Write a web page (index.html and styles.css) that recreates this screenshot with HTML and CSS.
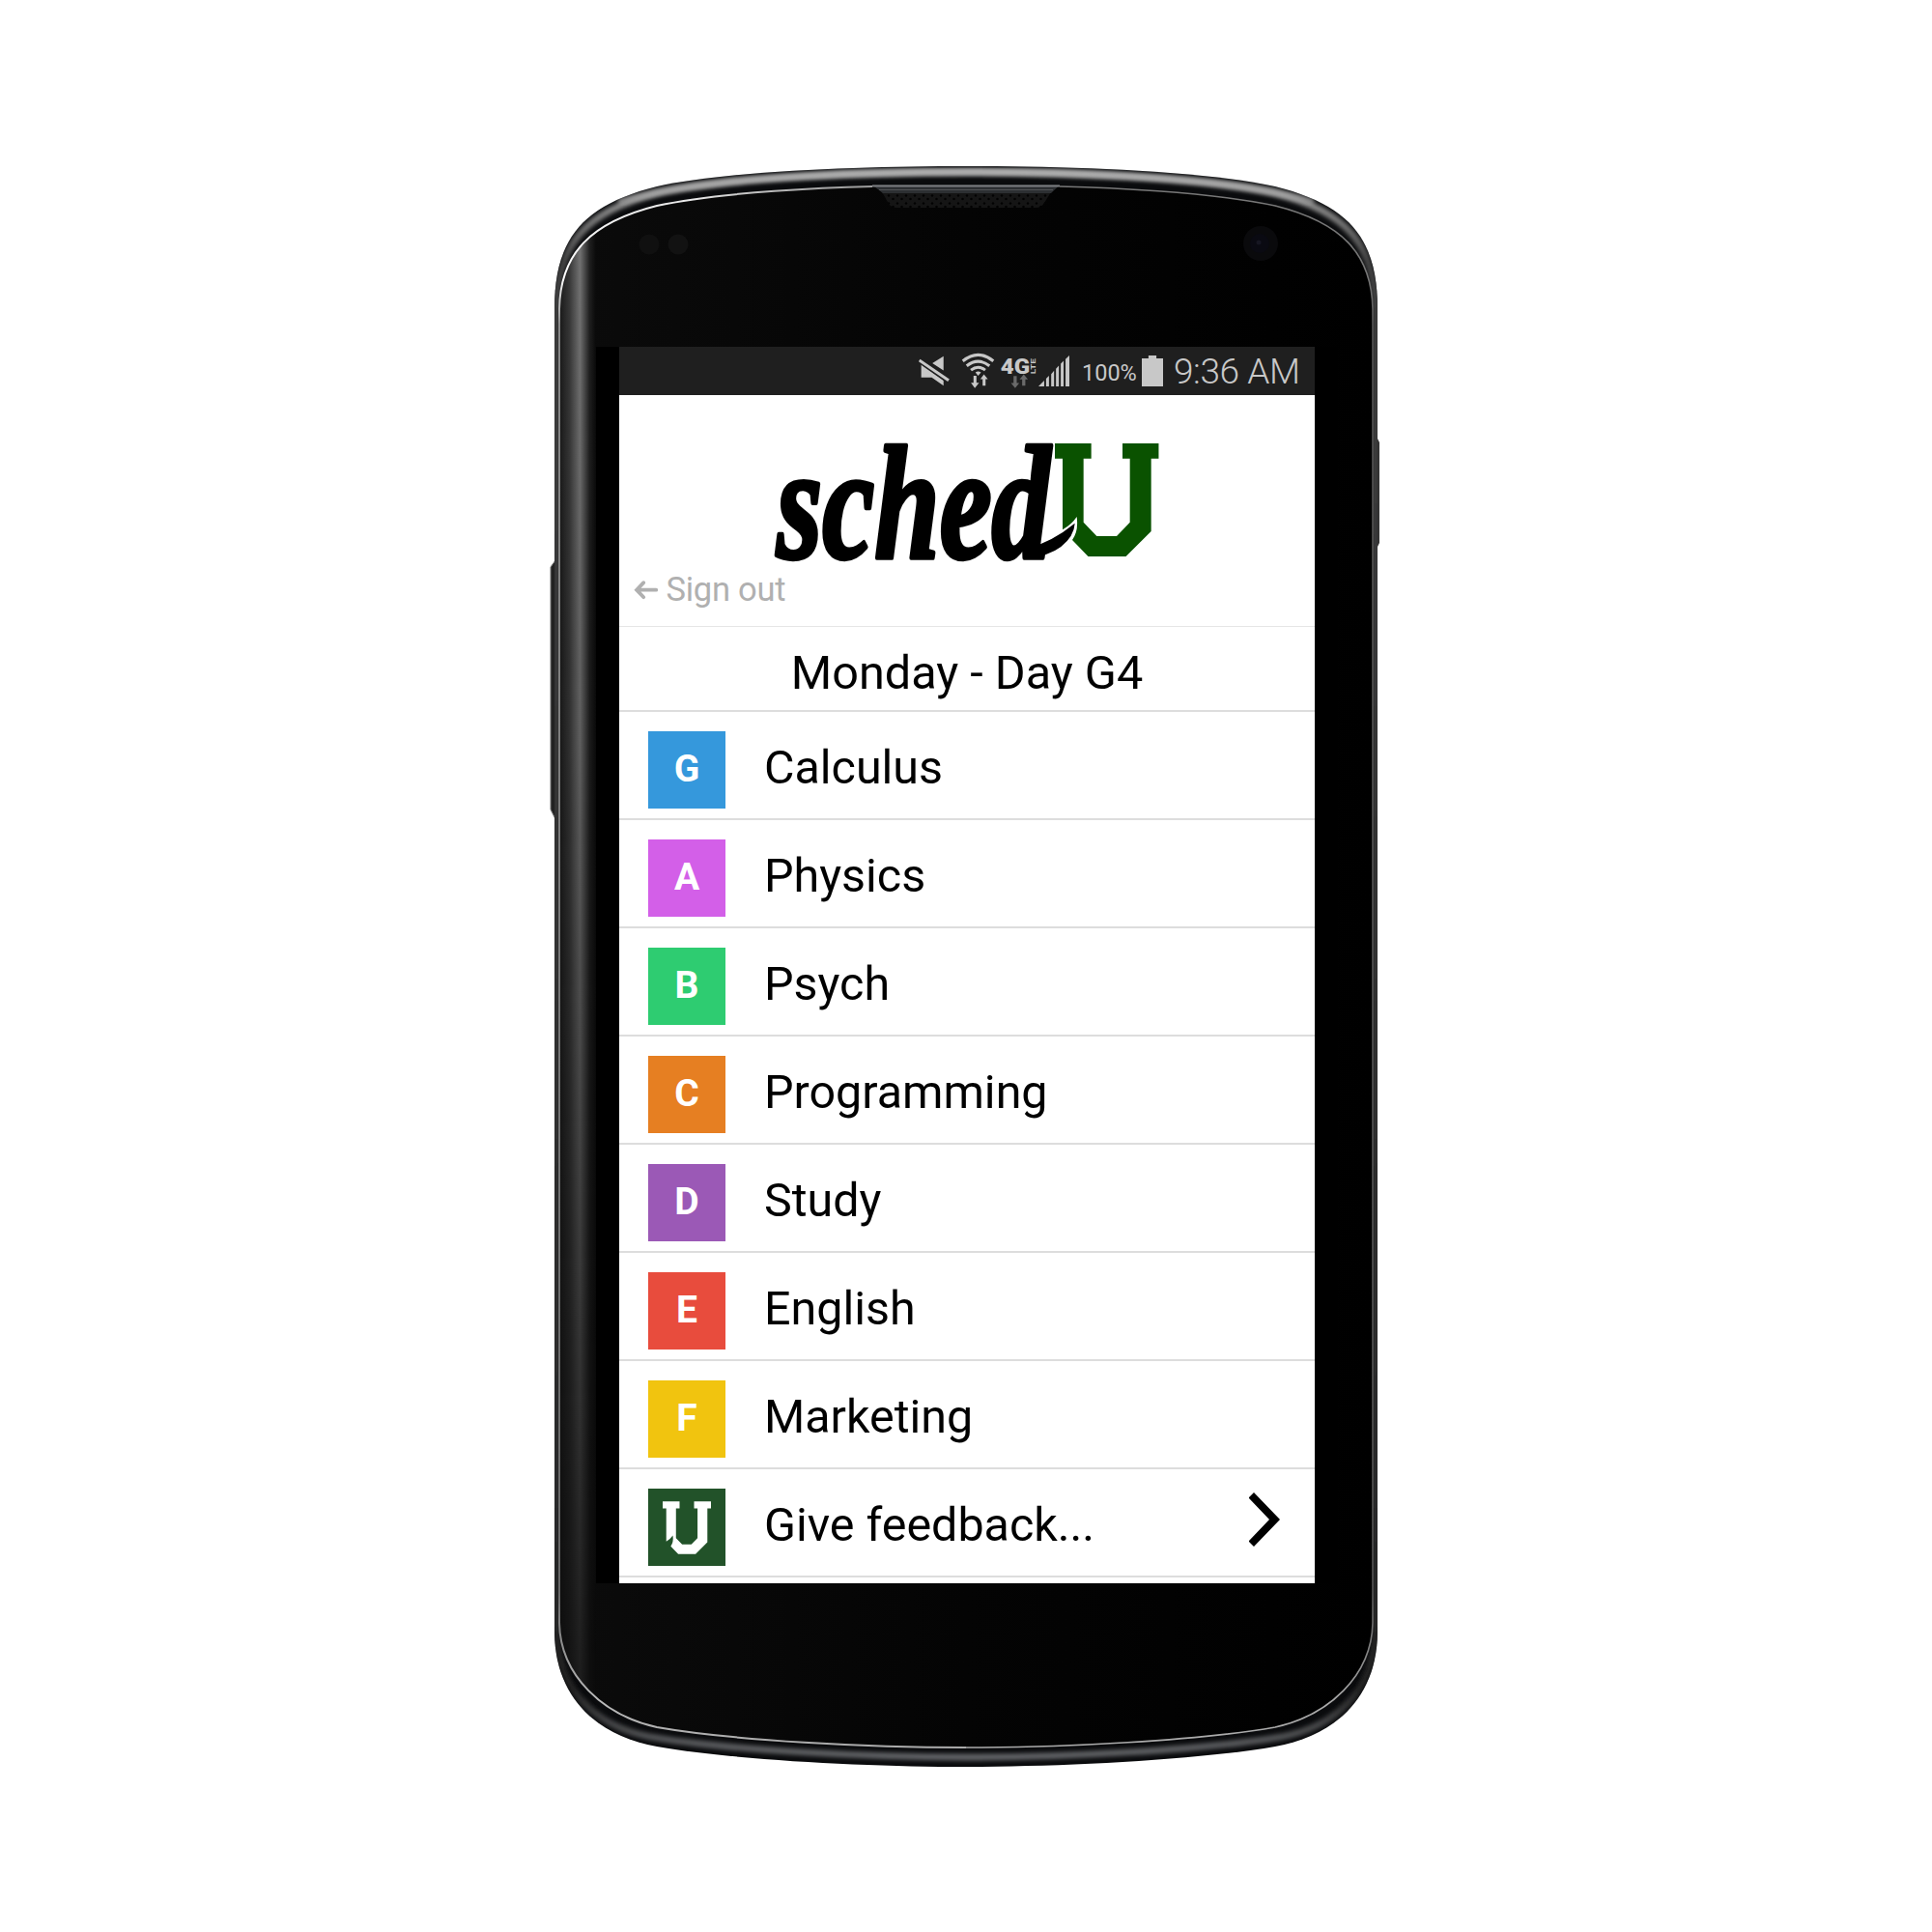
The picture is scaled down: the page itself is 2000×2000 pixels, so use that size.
FILE: index.html
```html
<!DOCTYPE html>
<html lang="en">
<head>
<meta charset="utf-8">
<title>schedU</title>
<link rel="stylesheet" href="styles.css">
</head>
<body>
<svg class="defs" width="0" height="0" aria-hidden="true">
  <symbol id="emblem" viewBox="906 57 323 352">
    <path d="M906 57H1019V104H995V302L1036 345H1098L1139 302V104H1116V57H1229V104H1205V330L1126 409H1010L960 357Q980 330 974 285Q958 309 930 325V104H906Z"/>
  </symbol>
</svg>
<main class="stage">
  <svg class="phone" viewBox="0 0 2000 2000" aria-hidden="true">
    <defs>
      <path id="body" d="M574 320C574 250 600 213 680 193C760 176 900 172 1000 172S1240 176 1320 193C1400 213 1426 250 1426 320V1690C1425 1760 1380 1797 1320 1808C1240 1822 1100 1829 1000 1829S760 1822 680 1808C620 1797 575 1760 574 1690Z"/>
      <path id="face" d="M579 320C580 262 612 230 680 213C750 198 860 194 903 193H1097C1140 194 1250 198 1320 213C1388 230 1420 262 1421 320V1680C1420 1735 1375 1776 1320 1788C1240 1802 1100 1809 1000 1809S760 1802 680 1788C625 1776 580 1735 579 1680Z"/>
      <clipPath id="bodyClip"><use href="#body"/></clipPath>
      <clipPath id="faceClip"><use href="#face"/></clipPath>
      <linearGradient id="glass"><stop offset="0" stop-color="#0b0b0b"/><stop offset=".5" stop-color="#040404"/><stop offset="1" stop-color="#000"/></linearGradient>
      <linearGradient id="sheen"><stop offset="0" stop-color="#1c1c1c"/><stop offset=".25" stop-color="#383838"/><stop offset=".55" stop-color="#747474"/><stop offset=".68" stop-color="#4c4c4c"/><stop offset=".82" stop-color="#202020"/><stop offset="1" stop-color="#0a0a0a"/></linearGradient>
      <linearGradient id="fade" x2="0" y2="1"><stop offset="0" stop-color="#fff"/><stop offset=".35" stop-color="#ccc"/><stop offset=".8" stop-color="#555"/><stop offset="1" stop-color="#222"/></linearGradient>
      <mask id="sheenMask"><rect x="570" y="200" width="60" height="1620" fill="url(#fade)"/></mask>
      <linearGradient id="rim" gradientUnits="userSpaceOnUse" x1="0" y1="172" x2="0" y2="1829"><stop offset="0" stop-color="#c8c8c8"/><stop offset=".025" stop-color="#888"/><stop offset=".06" stop-color="#444"/><stop offset=".9" stop-color="#2b2b2b"/><stop offset=".95" stop-color="#222"/><stop offset="1" stop-color="#6a6c70"/></linearGradient>
      <linearGradient id="edgeL" gradientUnits="userSpaceOnUse" x1="0" y1="190" x2="0" y2="1809"><stop offset="0" stop-color="#8a8a8a"/><stop offset=".01" stop-color="#e8e8e8"/><stop offset=".06" stop-color="#fff"/><stop offset=".09" stop-color="#888"/><stop offset=".9" stop-color="#666"/><stop offset=".97" stop-color="#bbb"/><stop offset="1" stop-color="#aaa"/></linearGradient>
      <linearGradient id="edgeR" gradientUnits="userSpaceOnUse" x1="0" y1="190" x2="0" y2="1809"><stop offset="0" stop-color="#777"/><stop offset=".06" stop-color="#777"/><stop offset=".09" stop-color="#555"/><stop offset=".9" stop-color="#555"/><stop offset=".97" stop-color="#aaa"/><stop offset="1" stop-color="#aaa"/></linearGradient>
      <filter id="soft2"><feGaussianBlur stdDeviation="2"/></filter>
      <pattern id="mesh" width="9" height="8" patternUnits="userSpaceOnUse"><rect width="9" height="8" fill="#151515"/><circle cx="2" cy="2.5" r="1.3" fill="#020202"/><circle cx="6.5" cy="6" r="1.3" fill="#020202"/></pattern>
    </defs>
    <path d="M575 580L570 587V838L575 848Z" fill="#222" stroke="#777" stroke-width="1"/>
    <path d="M1425 452L1428 458V562L1425 568Z" fill="#333"/>
    <use href="#body" fill="#0a0b0d"/>
    <g clip-path="url(#bodyClip)">
      <path d="M576 320C577 254 605 219 680 200C760 183 900 178 1000 178S1240 183 1320 200C1395 219 1423 254 1424 320V1690C1422 1752 1380 1790 1320 1799C1240 1812 1100 1819 1000 1819S760 1812 680 1799C620 1790 578 1752 576 1690Z" fill="none" stroke="url(#rim)" stroke-width="7" filter="url(#soft2)"/>
      <path d="M640 209C660 203 670 201 680 199C760 182 900 178 1000 178S1240 182 1320 199C1340 203 1350 206 1360 209" fill="none" stroke="#aaa" stroke-width="6" opacity=".7" filter="url(#soft2)"/>
    </g>
    <use href="#face" fill="url(#glass)"/>
    <g clip-path="url(#faceClip)"><rect x="580" y="200" width="37" height="1610" fill="url(#sheen)" mask="url(#sheenMask)"/></g>
    <path d="M903 193C860 194 750 198 680 213C612 230 580 262 579 320V1680C580 1735 625 1776 680 1788C760 1802 900 1809 1000 1809" fill="none" stroke="url(#edgeL)" stroke-width="2"/>
    <path d="M1097 193C1140 194 1250 198 1320 213C1388 230 1420 262 1421 320V1680C1420 1735 1375 1776 1320 1788C1240 1802 1100 1809 1000 1809" fill="none" stroke="url(#edgeR)" stroke-width="1.6"/>
    <path d="M903 193Q910 194 915 202L920 211Q923 215 928 215H1072Q1078 215 1081 210L1086 202Q1090 194 1097 193Z" fill="url(#mesh)"/>
    <path d="M903 191.500H1097L1088 200H914Z" fill="#2c2f32"/>
    <path d="M903 192.500H1097" stroke="#7b7d80" stroke-width="2"/>
    <path d="M910 196.500H1090" stroke="#505255" stroke-width="1"/>
    <circle cx="672" cy="253" r="10.500" fill="#101010"/><circle cx="702" cy="253" r="10.500" fill="#121212"/>
    <circle cx="1305" cy="252" r="18" fill="#0a0a0c"/><circle cx="1304" cy="252" r="10" fill="#0a0a12"/><circle cx="1303" cy="251" r="2.500" fill="#161622"/>
    <path d="M617 359H1385V1639H617Z" fill="#000"/>
  </svg>

  <section class="screen">
    <header class="status">
      <svg class="mute" viewBox="63 40 97 97"><path d="M141 42V87L106 64ZM71 67L141 117V135L104 109H71Z"/><path d="M67 54L157 117" class="cut"/><path d="M65 55L157 118" class="bar"/></svg>
      <svg class="wifi" viewBox="200 33 98 107"><g class="arc"><path d="M202 56Q249 18 296 56"/><path d="M214 71Q249 43 284 71"/><path d="M227 84Q249 67 271 84"/></g><path d="M241 91Q249 85 258 91L249 101Z"/><path d="M235 101H244V123H252L239 139L227 123H235ZM263 132V112H256L267 97L279 112H272V132Z"/></svg>
      <svg class="lte" viewBox="320 40 112 100"><text class="g4" x="319" y="94" textLength="92" lengthAdjust="spacingAndGlyphs">4G</text><text class="ltet" transform="translate(430 95) rotate(-90)" textLength="49" lengthAdjust="spacingAndGlyphs">LTE</text><path class="dim" d="M360 101H370V123H378L365 139L352 123H360ZM387 132V112H379L392 96L405 112H397V132Z"/></svg>
      <svg class="signal" viewBox="435 40 97 97"><path d="M435 137L453 119V137ZM459 113L468 104V137H459ZM475 98L484 88V137H475ZM490 82L499 72V137H490ZM505 66L514 57V137H505ZM520 51L532 40V137H520Z"/></svg>
      <span class="percent">100%</span>
      <svg class="battery" viewBox="757 38 67 97"><path d="M778 38H803V47H824V135H757V47H778Z"/></svg>
      <time class="clock">9:36 AM</time>
    </header>
    <div class="brand">
      <svg class="logo" viewBox="0 0 1260 480" role="img" aria-label="schedU">
        <text class="script" x="42" y="410" textLength="850" lengthAdjust="spacingAndGlyphs">sched</text>
        <path d="M815 385Q895 365 968 305Q966 345 925 378Q885 408 832 408Z"/>
        <use href="#emblem" x="906" y="57" width="323" height="352" class="green"/>
      </svg>
      <a class="signout"><svg viewBox="80 63 70 55"><path d="M145 91H88M107 69L86 91L107 113"/></svg><span>Sign out</span></a>
    </div>
    <h1 class="day"><span>Monday - Day G4</span></h1>
    <ul class="periods">
      <li><b class="tile blue">G</b><span>Calculus</span></li>
      <li><b class="tile pink">A</b><span>Physics</span></li>
      <li><b class="tile mint">B</b><span>Psych</span></li>
      <li><b class="tile orange">C</b><span>Programming</span></li>
      <li><b class="tile purple">D</b><span>Study</span></li>
      <li><b class="tile red">E</b><span>English</span></li>
      <li><b class="tile yellow">F</b><span>Marketing</span></li>
      <li><b class="tile forest"><svg><use href="#emblem"/></svg></b><span>Give feedback...</span><svg class="chevron" viewBox="0 0 32 56"><path d="M5 0L32 28L5 56L0 51V50L21 28L0 6V5Z"/></svg></li>
    </ul>
  </section>
</main>
</body>
</html>
```
FILE: styles.css
```css
* { box-sizing: border-box; }
body { margin: 0; background: #fff; font-family: Roboto, "Liberation Sans", sans-serif; color: #000; }
svg { display: block; flex: none; }
.defs { position: absolute; }
.stage { width: 2000px; height: 2000px; display: grid; overflow: hidden; }
.phone { grid-area: 1 / 1; width: 2000px; height: 2000px; }
.screen { grid-area: 1 / 1; z-index: 1; margin: 359px 0 0 641px; width: 720px; height: 1280px; background: #fff; overflow: hidden; }

.status { height: 50px; background: #1f1f1f; color: #c8c8c8; fill: #c8c8c8; display: flex; align-items: flex-start; padding: 0 0 0 310px; white-space: nowrap; }
.mute { width: 32px; height: 32px; margin-top: 9px; }
.mute .cut { stroke: #1f1f1f; stroke-width: 22; }
.mute .bar { stroke: #c8c8c8; stroke-width: 9; }
.wifi { width: 33px; height: 36px; margin: 7px 0 0 13px; overflow: visible; }
.wifi .arc { fill: none; stroke: #c8c8c8; stroke-width: 9; }
.lte { width: 37px; height: 33px; margin: 10px 0 0 7px; overflow: visible; }
.g4 { font: 900 66px Roboto, sans-serif; }
.ltet { font: 700 24px Roboto, sans-serif; }
.dim { fill: #6a6a6a; }
.signal { width: 32px; height: 32px; margin: 9px 0 0 2px; }
.percent { font-size: 23.5px; line-height: 28px; margin: 13px 0 0 13px; width: 57px; }
.battery { width: 22px; height: 32px; margin: 9px 0 0 5px; }
.clock { font-size: 37px; font-weight: 300; line-height: 44px; letter-spacing: -.4px; margin: 4px 0 0 11px; }

.brand { height: 240px; padding-top: 31px; border-bottom: 1px solid #e6e6e6; }
.logo { width: 420px; height: 160px; margin-left: 149px; overflow: visible; }
.script { font: italic 700 500px "Liberation Serif", serif; stroke: #000; stroke-width: 14; stroke-linejoin: round; }
.green { fill: #0a5200; }
.signout { display: flex; align-items: center; height: 40px; margin: -10px 0 0 15.500px; gap: 9px; color: #b0b0b0; font-size: 34.5px; letter-spacing: -.25px; }
.signout svg { width: 24px; height: 19px; fill: none; stroke: #b0b0b0; stroke-width: 11; stroke-linecap: round; overflow: visible; }

.day { margin: 0; height: 88px; border-bottom: 2px solid #ddd; text-align: center; font-size: 48.6px; font-weight: 400; line-height: 56px; padding-top: 20px; }
.periods { margin: 0; padding: 0; list-style: none; }
.periods li { height: 112px; border-bottom: 2px solid #ddd; display: flex; align-items: flex-start; padding: 20px 36px 0 30px; font-size: 48.4px; }
.periods span { margin: 10px 0 0 40px; line-height: 56px; }
.tile { width: 80px; height: 80px; display: flex; justify-content: center; color: #fff; font-size: 39px; line-height: 78px; }
.tile svg { width: 50px; height: 55px; margin-top: 13px; fill: #fff; }
.blue { background: #3598dc; }
.pink { background: #d35fe8; }
.mint { background: #2ecc71; }
.orange { background: #e67f22; }
.purple { background: #9b59b6; }
.red { background: #e84c3d; }
.yellow { background: #f1c40f; }
.forest { background: #225229; }
.chevron { width: 32px; height: 56px; margin: 4px 0 0 auto; }
```
